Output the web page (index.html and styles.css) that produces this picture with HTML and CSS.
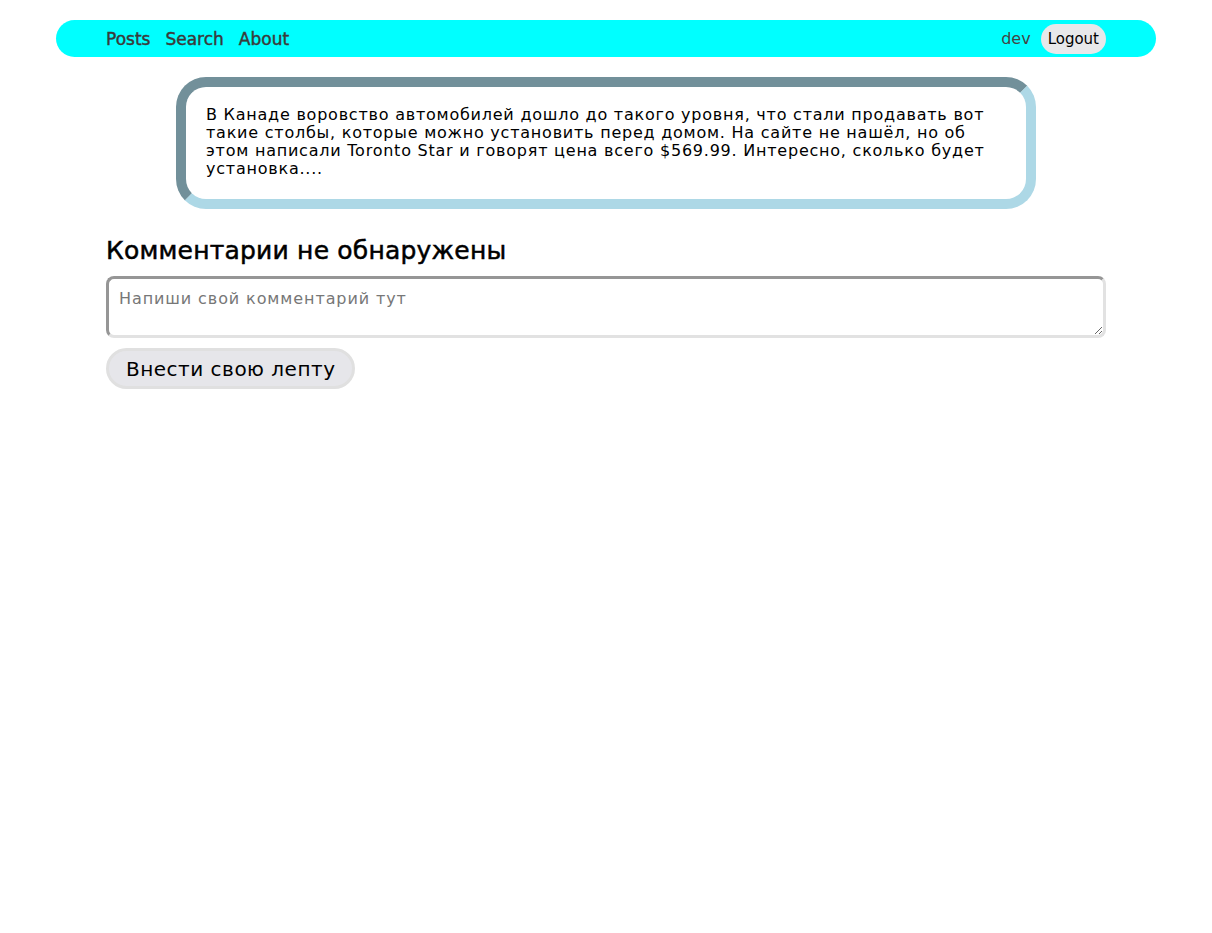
FILE: index.html
```html
<!DOCTYPE html>
<html lang="ru">
<head>
<meta charset="utf-8">
<title>Post</title>
<link rel="stylesheet" href="styles.css">
</head>
<body>
<div class="page">
  <nav class="nav">
    <div class="nav-links">
      <a class="nav-link" href="#">Posts</a>
      <a class="nav-link" href="#">Search</a>
      <a class="nav-link" href="#">About</a>
    </div>
    <div class="nav-user">
      <span class="username">dev</span>
      <button class="logout">Logout</button>
    </div>
  </nav>
  <main class="content">
    <article class="post">
      <p class="post-text">В Канаде воровство автомобилей дошло до такого уровня, что стали продавать вот такие столбы, которые можно установить перед домом. На сайте не нашёл, но об этом написали Toronto Star и говорят цена всего $569.99. Интересно, сколько будет установка....</p>
    </article>
    <section class="comments">
      <h2 class="comments-title">Комментарии не обнаружены</h2>
      <form class="comment-form">
        <textarea class="comment-input" placeholder="Напиши свой комментарий тут"></textarea>
        <button type="button" class="submit">Внести свою лепту</button>
      </form>
    </section>
  </main>
</div>
</body>
</html>
```
FILE: styles.css
```css
html, body {
  margin: 0;
  padding: 0;
  background: #ffffff;
}
body {
  font-family: "DejaVu Sans", "Noto Sans", sans-serif;
  color: #000;
}
.page {
  width: 1100px;
  margin: 20px auto 0;
}
.nav {
  display: flex;
  justify-content: space-between;
  align-items: center;
  height: 37px;
  padding: 0 50px;
  background: #00ffff;
  border-radius: 19px;
}
.nav-links {
  display: flex;
  gap: 15px;
}
.nav-link {
  color: #3a3a3a;
  text-decoration: none;
  font-size: 17px;
  -webkit-text-stroke: 0.45px #3a3a3a;
}
.nav-user {
  display: flex;
  align-items: center;
  gap: 10px;
}
.username {
  color: #444;
  font-size: 16px;
}
.logout {
  font-family: inherit;
  font-size: 15px;
  color: #000;
  background: #e8e8ea;
  border: none;
  border-radius: 15px;
  height: 30px;
  padding: 0 7px;
}
.content {
  padding: 0 50px;
}
.post {
  width: 860px;
  box-sizing: border-box;
  margin: 20px auto 0;
  border: 10px solid #add8e6;
  border-top-color: #72909a;
  border-left-color: #72909a;
  border-radius: 30px;
  padding: 19px 20px 21px;
}
.post-text {
  margin: 0;
  font-size: 16px;
  line-height: 18px;
  letter-spacing: 0.77px;
}
.comments-title {
  margin: 28px 0 11px;
  font-size: 25px;
  line-height: 28px;
  font-weight: normal;
  letter-spacing: 0.2px;
  -webkit-text-stroke: 0.5px #000;
}
.comment-form {
  display: flex;
  flex-direction: column;
  align-items: flex-start;
  gap: 10px;
}
.comment-input {
  box-sizing: border-box;
  width: 1000px;
  height: 62px;
  border: 3px solid #e2e2e2;
  border-top-color: #969696;
  border-left-color: #969696;
  border-radius: 8px;
  padding: 10px;
  font-family: inherit;
  font-size: 16px;
  letter-spacing: 0.9px;
  resize: vertical;
}
.comment-input::placeholder {
  color: #777;
}
.submit {
  font-family: inherit;
  font-size: 20px;
  letter-spacing: 0.5px;
  color: #000;
  background: #e6e6ea;
  border: 3px solid #e0e0e0;
  border-radius: 21px;
  height: 41px;
  padding: 0 17px;
}
```
